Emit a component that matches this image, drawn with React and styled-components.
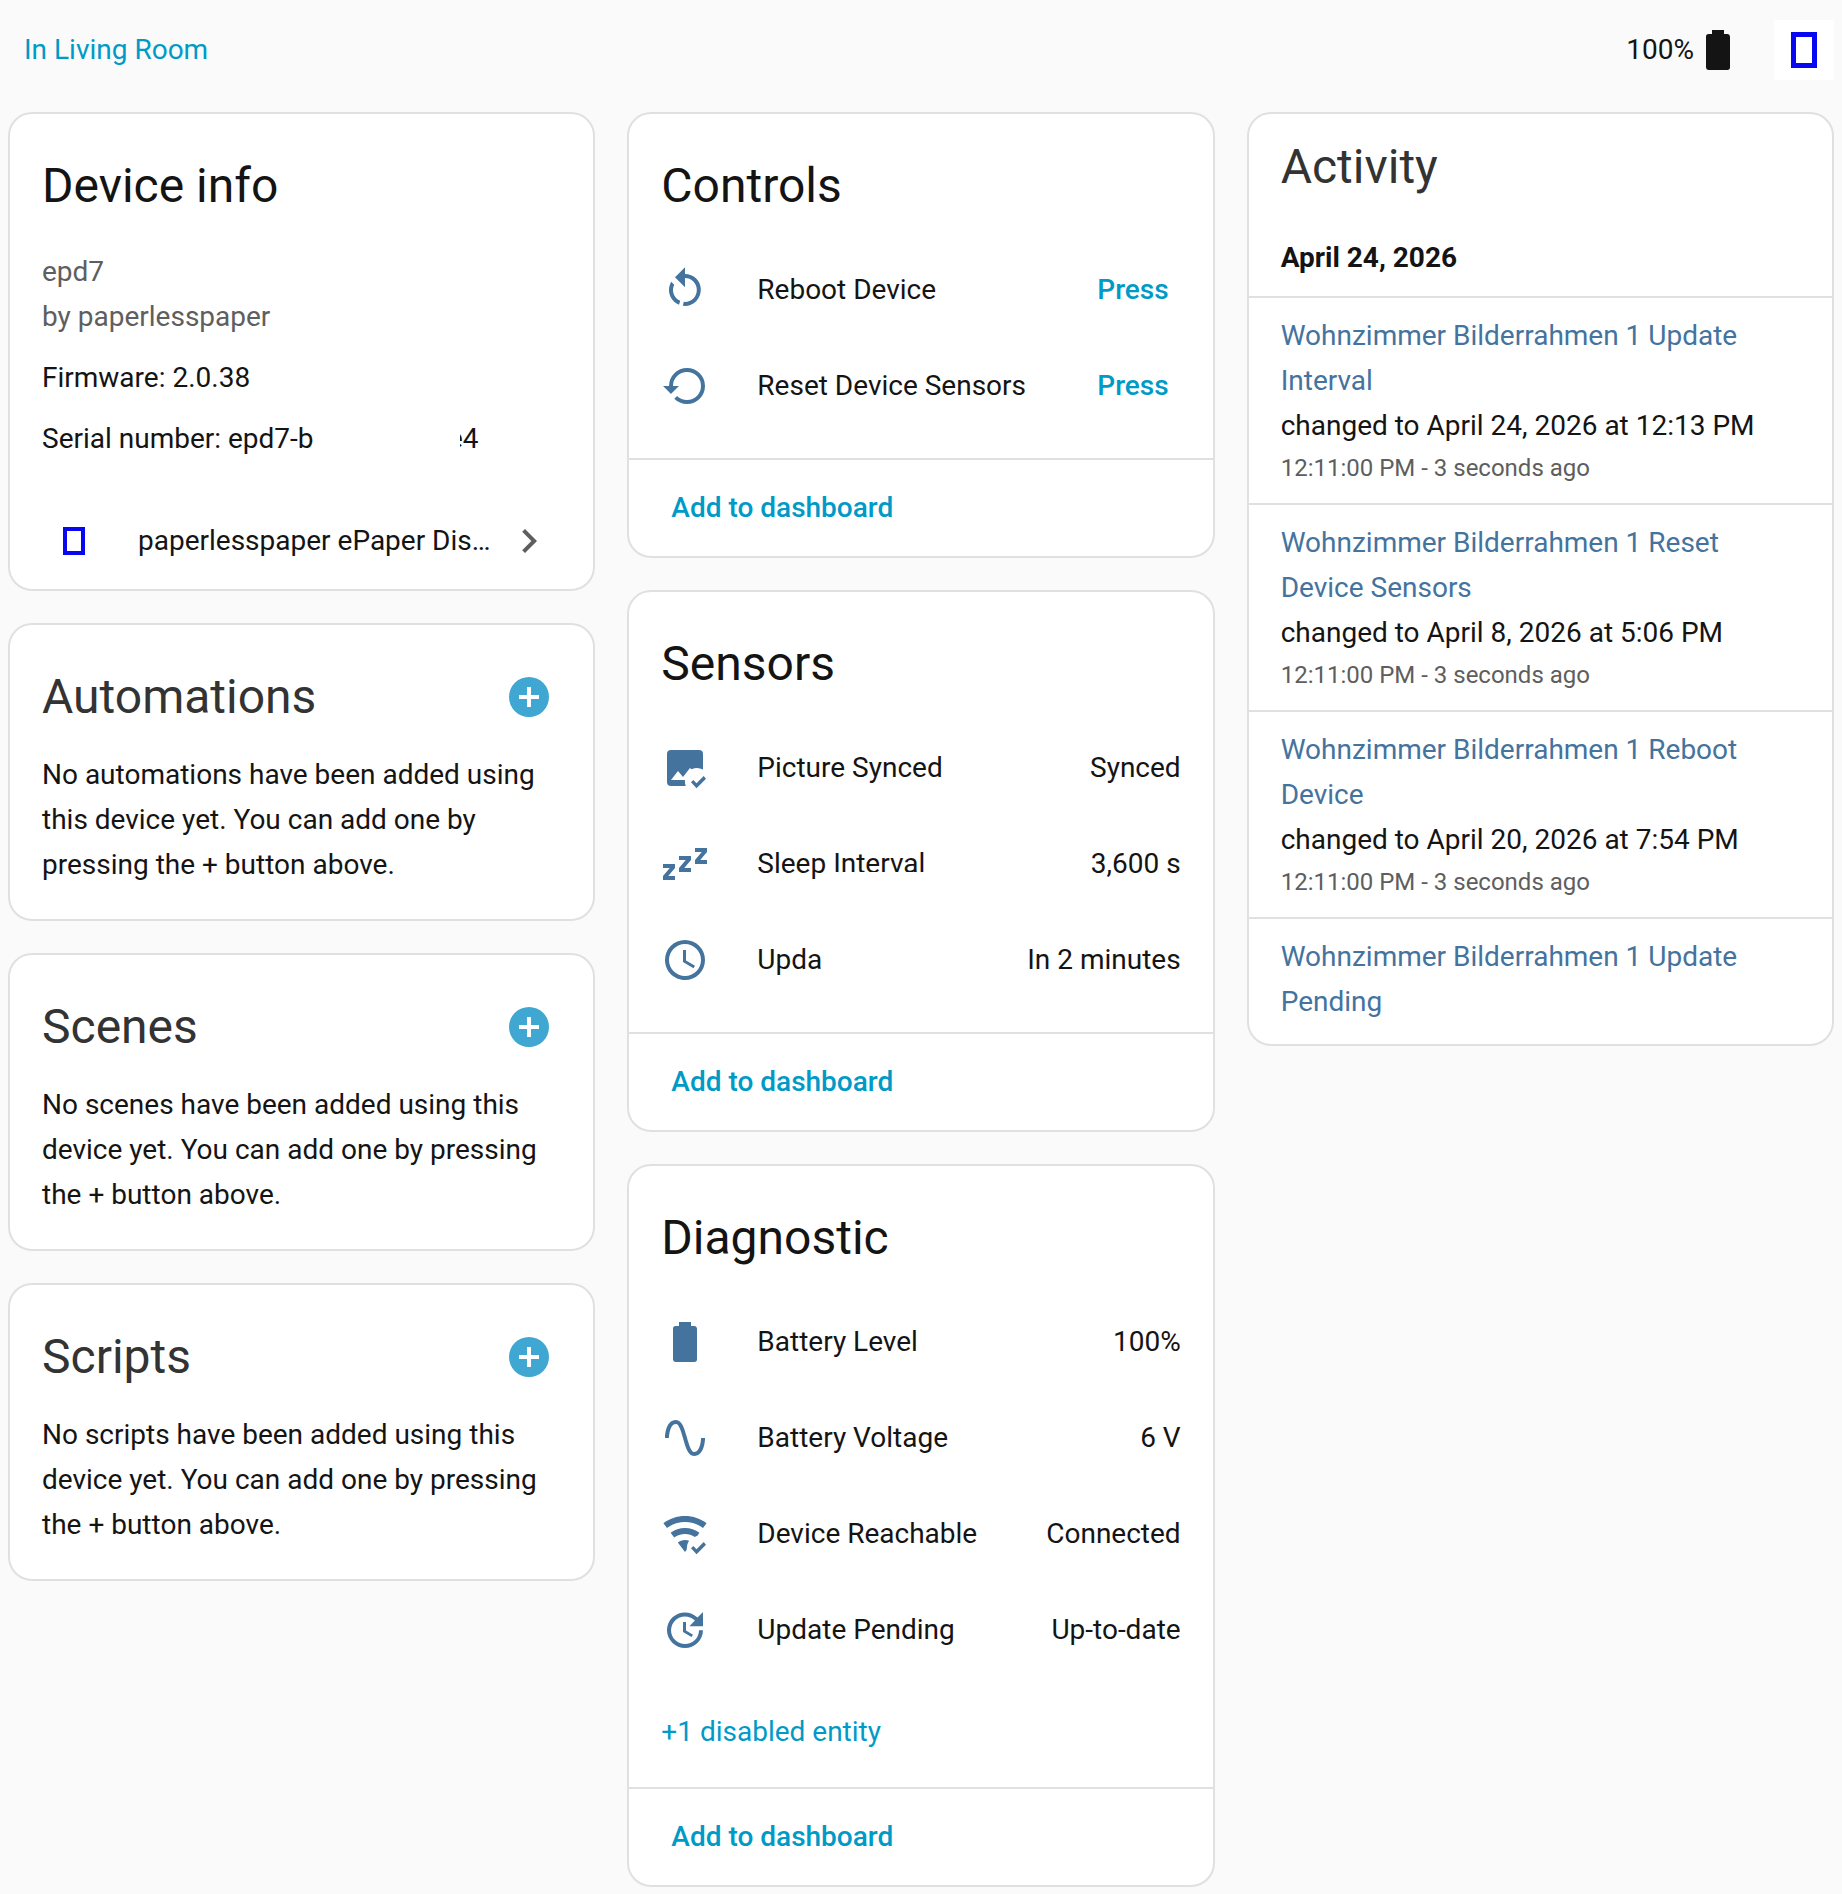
import React from 'react';
import styled, { createGlobalStyle } from 'styled-components';

const icons = {
  battery:
    'M16.67,4H15V2H9V4H7.33A1.33,1.33 0 0,0 6,5.33V20.67C6,21.4 6.6,22 7.33,22H16.67A1.33,1.33 0 0,0 18,20.67V5.33C18,4.6 17.4,4 16.67,4Z',
  chevron: 'M8.59,16.58L13.17,12L8.59,7.41L10,6L16,12L10,18L8.59,16.58Z',
  plus: 'M17,13H13V17H11V13H7V11H11V7H13V11H17M12,2A10,10 0 0,0 2,12A10,10 0 0,0 12,22A10,10 0 0,0 22,12A10,10 0 0,0 12,2Z',
  restart:
    'M12,4C14.1,4 16.1,4.8 17.6,6.3C20.7,9.4 20.7,14.5 17.6,17.6C15.8,19.5 13.3,20.2 10.9,19.9L11.4,17.9C13.1,18.1 14.9,17.5 16.2,16.2C18.5,13.9 18.5,10.1 16.2,7.7C15.1,6.6 13.5,6 12,6V10.6L7,5.6L12,0.6V4M6.3,17.6C3.7,15 3.3,11 5.1,7.9L6.6,9.4C5.5,11.6 5.9,14.4 7.8,16.2C8.3,16.7 8.9,17.1 9.6,17.4L9,19.4C8,19 7.1,18.4 6.3,17.6Z',
  restore:
    'M13,3A9,9 0 0,0 4,12H1L4.89,15.89L4.96,16.03L9,12H6A7,7 0 0,1 13,5A7,7 0 0,1 20,12A7,7 0 0,1 13,19C11.07,19 9.32,18.21 8.06,16.94L6.64,18.36C8.27,20 10.5,21 13,21A9,9 0 0,0 22,12A9,9 0 0,0 13,3Z',
  imageCheck:
    'M5,3H19A2,2 0 0,1 21,5V12.8A6,6 0 0,0 15.3,12.65L14.5,12L11,16.5L8.5,13.5L5,18H12A6,6 0 0,0 12.4,21H5A2,2 0 0,1 3,19V5A2,2 0 0,1 5,3M17.75,22.16L15,19.16L16.16,18L17.75,19.59L21.34,16L22.5,17.41L17.75,22.16Z',
  sleep:
    'M23,12H17V10L20.39,6H17V4H23V6L19.62,10H23V12M15,16H9V14L12.39,10H9V8H15V10L11.62,14H15V16M7,20H1V18L4.39,14H1V12H7V14L3.62,18H7V20Z',
  clock:
    'M12,20A8,8 0 0,0 20,12A8,8 0 0,0 12,4A8,8 0 0,0 4,12A8,8 0 0,0 12,20M12,2A10,10 0 0,1 22,12A10,10 0 0,1 12,22C6.47,22 2,17.5 2,12A10,10 0 0,1 12,2M12.5,7V12.25L17,14.92L16.25,16.15L11,13V7H12.5Z',
  sine: 'M16.5,21C13.5,21 12.31,16.76 11.05,12.28C10.14,9.04 9,5 7.5,5C4.11,5 4,11.93 4,12H2C2,11.63 2.06,3 7.5,3C10.5,3 11.71,7.25 12.97,11.74C13.83,14.8 15,19 16.5,19C19.94,19 20.03,12.07 20.03,12H22.03C22.03,12.37 21.97,21 16.5,21Z',
  wifiCheck:
    'M12,21L8.4,16.2C9.4,15.45 10.65,15 12,15C12.7,15 13.4,15.12 14.05,15.34C13.3,16.4 12.9,17.8 12.85,19.9L12,21M12,3C7.95,3 4.21,4.34 1.2,6.6L3,9C5.5,7.12 8.62,6 12,6C15.38,6 18.5,7.12 21,9L22.8,6.6C19.79,4.34 16.05,3 12,3M12,9C9.3,9 6.81,9.89 4.8,11.4L6.6,13.8C8.1,12.67 9.97,12 12,12C13.8,12 15.5,12.5 16.9,13.45C17.3,13.25 17.7,13.15 18.1,13.05L19.2,11.4C17.19,9.89 14.7,9 12,9M17.75,22.16L15,19.16L16.16,18L17.75,19.59L21.34,16L22.5,17.41L17.75,22.16Z',
  update:
    'M21,10.12H14.22L16.96,7.3C14.23,4.6 9.81,4.5 7.08,7.2C4.35,9.91 4.35,14.28 7.08,17C9.81,19.7 14.23,19.7 16.96,17C18.32,15.65 19,14.08 19,12.1H21C21,14.08 20.12,16.65 18.36,18.39C14.85,21.87 9.15,21.87 5.64,18.39C2.14,14.92 2.11,9.28 5.62,5.81C9.13,2.34 14.76,2.34 18.27,5.81L21,3V10.12M12.5,8V12.25L16,14.33L15.28,15.54L11,13V8H12.5Z',
};

const controls = [
  { icon: 'restart', name: 'Reboot Device', action: 'Press' },
  { icon: 'restore', name: 'Reset Device Sensors', action: 'Press' },
];

// cutBottom and cutRight: the end of a name that is partly blanked out
const sensors = [
  { icon: 'imageCheck', name: 'Picture Synced', value: 'Synced' },
  { icon: 'sleep', name: 'Sleep ', cutBottom: 'Interval', value: '3,600 s' },
  { icon: 'clock', cutRight: 'Upda', value: 'In 2 minutes' },
];

const diagnostics = [
  { icon: 'battery', name: 'Battery Level', value: '100%' },
  { icon: 'sine', name: 'Battery Voltage', value: '6 V' },
  { icon: 'wifiCheck', name: 'Device Reachable', value: 'Connected' },
  { icon: 'update', name: 'Update Pending', value: 'Up-to-date' },
];

const related = [
  {
    title: 'Automations',
    text: 'No automations have been added using this device yet. You can add one by pressing the + button above.',
  },
  {
    title: 'Scenes',
    text: 'No scenes have been added using this device yet. You can add one by pressing the + button above.',
  },
  {
    title: 'Scripts',
    text: 'No scripts have been added using this device yet. You can add one by pressing the + button above.',
  },
];

const activity = [
  {
    name: 'Wohnzimmer Bilderrahmen 1 Update Interval',
    state: 'changed to April 24, 2026 at 12:13 PM',
    time: '12:11:00 PM - 3 seconds ago',
  },
  {
    name: 'Wohnzimmer Bilderrahmen 1 Reset Device Sensors',
    state: 'changed to April 8, 2026 at 5:06 PM',
    time: '12:11:00 PM - 3 seconds ago',
  },
  {
    name: 'Wohnzimmer Bilderrahmen 1 Reboot Device',
    state: 'changed to April 20, 2026 at 7:54 PM',
    time: '12:11:00 PM - 3 seconds ago',
  },
  { name: 'Wohnzimmer Bilderrahmen 1 Update Pending' },
];

function Icon({ name }) {
  return (
    <IconSvg viewBox="0 0 24 24" aria-hidden="true">
      <path d={icons[name]} />
    </IconSvg>
  );
}

function Logo({ width, height, stroke }) {
  return (
    <svg width={width} height={height} aria-hidden="true">
      <rect
        x={stroke / 2}
        y={stroke / 2}
        width={width - stroke}
        height={height - stroke}
        fill="none"
        stroke="#0808f0"
        strokeWidth={stroke}
      />
    </svg>
  );
}

function EntitiesCard({ title, entities, disabled }) {
  return (
    <Card>
      <CardHeader>
        <Title>{title}</Title>
      </CardHeader>
      <EntityList>
        {entities.map(({ icon, name, cutBottom, cutRight, value, action }) => (
          <Entity key={icon}>
            <Icon name={icon} />
            <EntityName>
              {name}
              {cutBottom && <CutBottom>{cutBottom}</CutBottom>}
              {cutRight && <CutRight>{cutRight}</CutRight>}
            </EntityName>
            {action ? (
              <PressButton type="button">{action}</PressButton>
            ) : (
              <span>{value}</span>
            )}
          </Entity>
        ))}
      </EntityList>
      {disabled && <ShowMore type="button">{disabled}</ShowMore>}
      <CardActions>
        <TextButton type="button">Add to dashboard</TextButton>
      </CardActions>
    </Card>
  );
}

export default function App() {
  return (
    <Page>
      <GlobalStyle />
      <TopBar>
        <AreaLink href="#area">In Living Room</AreaLink>
        <Battery>
          100%
          <Icon name="battery" />
        </Battery>
        <LogoBox>
          <Logo width={26} height={36} stroke={5} />
        </LogoBox>
      </TopBar>
      <Columns>
        <Column>
          <Card>
            <CardHeader>
              <Title>Device info</Title>
            </CardHeader>
            <DeviceInfo>
              <Model>
                epd7
                <br />
                by paperlesspaper
              </Model>
              <div>Firmware: 2.0.38</div>
              <Serial>
                Serial number: epd7-b
                <SerialEnd>e4</SerialEnd>
              </Serial>
            </DeviceInfo>
            <IntegrationLink href="#integration">
              <IntegrationLogo>
                <Logo width={22} height={28} stroke={4} />
              </IntegrationLogo>
              <IntegrationName>paperlesspaper ePaper Display</IntegrationName>
              <Icon name="chevron" />
            </IntegrationLink>
          </Card>
          {related.map(({ title, text }) => (
            <Card key={title}>
              <CardHeader>
                <Title $soft>{title}</Title>
                <AddButton type="button" aria-label={`Add ${title}`}>
                  <Icon name="plus" />
                </AddButton>
              </CardHeader>
              <CardText>{text}</CardText>
            </Card>
          ))}
        </Column>
        <Column>
          <EntitiesCard title="Controls" entities={controls} />
          <EntitiesCard title="Sensors" entities={sensors} />
          <EntitiesCard
            title="Diagnostic"
            entities={diagnostics}
            disabled="+1 disabled entity"
          />
        </Column>
        <Column>
          <Card>
            <ActivityHeader>
              <Title $soft>Activity</Title>
            </ActivityHeader>
            <ActivityDate>April 24, 2026</ActivityDate>
            {activity.map(({ name, state, time }) => (
              <Entry key={name}>
                <EntryLink href="#entity">{name}</EntryLink>
                {state && <div>{state}</div>}
                {time && <EntryTime>{time}</EntryTime>}
              </Entry>
            ))}
          </Card>
        </Column>
      </Columns>
    </Page>
  );
}

const GlobalStyle = createGlobalStyle`
  * {
    box-sizing: border-box;
  }

  body {
    margin: 0;
    background-color: #fafafa;
    color: #141414;
    font-family: Roboto, 'Noto Sans', sans-serif;
    font-size: 28px;
    line-height: 45px;
  }

  a {
    text-decoration: none;
  }

  button {
    padding: 0;
    border: none;
    background: none;
    color: #009ac7;
    font: inherit;
    cursor: pointer;
  }
`;

const Page = styled.main`
  padding: 20px 8px 0;
`;

const TopBar = styled.header`
  display: flex;
  align-items: center;
  margin-bottom: 32px;
  line-height: 44px;
`;

const AreaLink = styled.a`
  margin-right: auto;
  padding-left: 16px;
  color: #009ac7;
`;

const Battery = styled.div`
  display: flex;
  align-items: center;
  margin-right: 32px;
`;

const LogoBox = styled.div`
  display: flex;
  justify-content: center;
  align-items: center;
  width: 60px;
  height: 60px;
  background-color: #fff;
`;

const Columns = styled.div`
  display: grid;
  grid-template-columns: repeat(3, minmax(0, 1fr));
  align-items: start;
  gap: 32px;
`;

const Column = styled.div`
  display: flex;
  flex-direction: column;
  gap: 32px;
`;

const Card = styled.section`
  border: 2px solid #e0e0e0;
  border-radius: 24px;
  background-color: #fff;
  overflow: hidden;
`;

const CardHeader = styled.div`
  display: flex;
  justify-content: space-between;
  align-items: center;
  padding: 24px 40px 7px 32px;
`;

const Title = styled.h1`
  margin: 0;
  color: ${({ $soft }) => ($soft ? '#333' : '#141414')};
  font-size: 48px;
  font-weight: 400;
  line-height: 96px;
`;

const IconSvg = styled.svg`
  flex: none;
  display: block;
  width: 48px;
  height: 48px;
  fill: currentColor;
`;

const AddButton = styled.button`
  color: #3fa7d1;
`;

const CardText = styled.div`
  padding: 0 32px 32px;
`;

const DeviceInfo = styled.div`
  display: flex;
  flex-direction: column;
  gap: 16px;
  padding: 8px 32px 32px;
`;

const Model = styled.div`
  color: #5e5e5e;
`;

const Serial = styled.div`
  display: flex;
`;

/* the middle of the serial number is blanked out */
const SerialEnd = styled.span`
  display: flex;
  justify-content: flex-end;
  width: 19px;
  margin-left: 146px;
  overflow: hidden;
`;

const IntegrationLink = styled.a`
  display: flex;
  align-items: center;
  height: 96px;
  padding: 0 40px;
  color: #5e5e5e;
  line-height: 44px;
`;

const IntegrationLogo = styled.span`
  display: flex;
  justify-content: center;
  flex: none;
  width: 48px;
  margin-right: 40px;
`;

const IntegrationName = styled.span`
  flex: 1;
  margin-right: 12px;
  color: #141414;
  overflow: hidden;
  text-overflow: ellipsis;
  white-space: nowrap;
`;

const EntityList = styled.div`
  padding: 1px 32px 0;
`;

const Entity = styled.div`
  display: flex;
  align-items: center;
  height: 96px;
  line-height: 44px;

  > svg {
    color: #44739e;
  }
`;

const EntityName = styled.span`
  flex: 1;
  margin-left: 48px;
`;

const CutBottom = styled.span`
  display: inline-block;
  clip-path: inset(0 0 14px 0);
`;

const CutRight = styled.span`
  display: block;
  width: 64px;
  overflow: hidden;
`;

const TextButton = styled.button`
  font-weight: 500;
`;

const PressButton = styled(TextButton)`
  padding: 0 12px;
`;

const ShowMore = styled.button`
  display: block;
  margin: 31px 32px 33px;
`;

const CardActions = styled.div`
  display: flex;
  align-items: center;
  height: 98px;
  margin-top: 24px;
  padding: 0 42px;
  border-top: 2px solid #e0e0e0;
  line-height: 44px;
`;

const ActivityHeader = styled.div`
  padding: 5px 32px 0;
`;

const ActivityDate = styled.div`
  padding: 20px 32px 16px;
  font-weight: 700;
`;

const Entry = styled.div`
  padding: 15px 32px;
  border-top: 2px solid #e0e0e0;

  &:last-child {
    padding-bottom: 20px;
  }
`;

const EntryLink = styled.a`
  display: block;
  color: #44739e;
`;

const EntryTime = styled.div`
  color: #5e5e5e;
  font-size: 24px;
  line-height: 40px;
`;
